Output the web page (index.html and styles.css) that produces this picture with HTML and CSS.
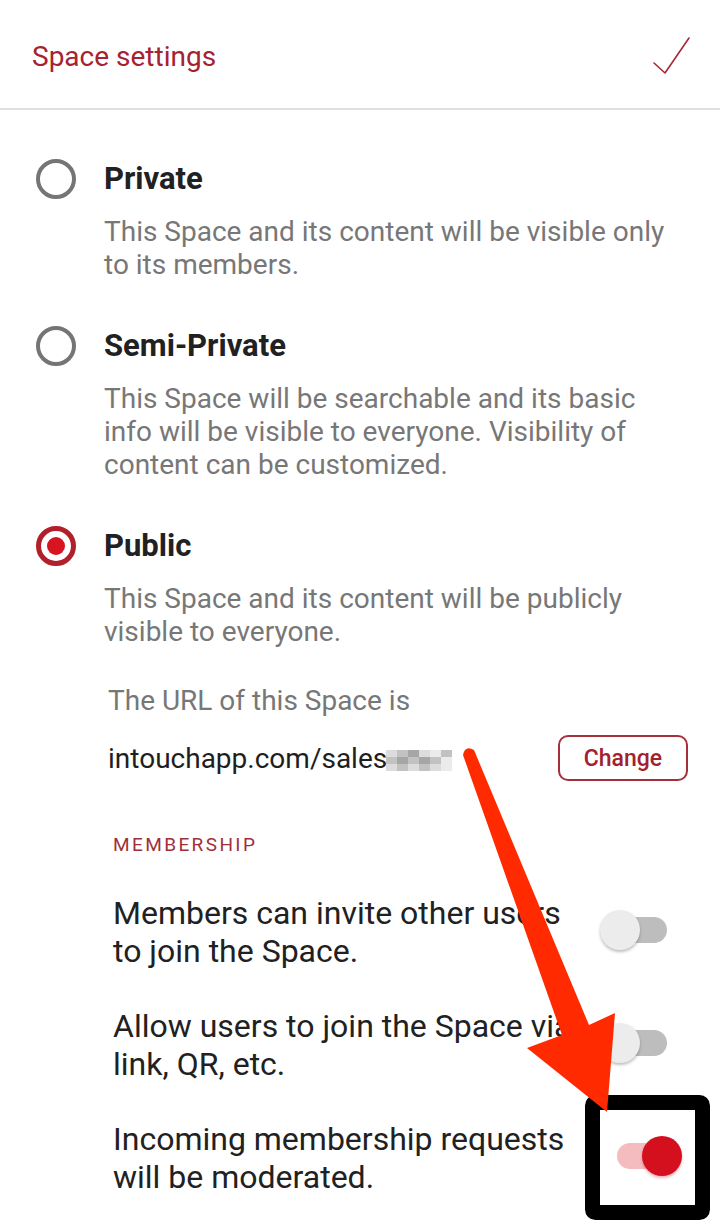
FILE: index.html
```html
<!DOCTYPE html>
<html lang="en">
<head>
<meta charset="utf-8">
<title>Space settings</title>
<link rel="stylesheet" href="styles.css">
</head>
<body>
<div class="screen">
  <header class="topbar">
    <h1 class="topbar-title">Space settings</h1>
    <svg class="done-icon" width="40" height="40" viewBox="0 0 40 40" aria-hidden="true">
      <path d="M2 27 L13 37 L37 2" fill="none" stroke="#a62835" stroke-width="1.6" stroke-linecap="round" stroke-linejoin="round"/>
    </svg>
  </header>

  <section class="options">
    <div class="option">
      <span class="radio"></span>
      <div class="option-body">
        <div class="option-title">Private</div>
        <p class="option-desc">This Space and its content will be visible only to its members.</p>
      </div>
    </div>
    <div class="option">
      <span class="radio"></span>
      <div class="option-body">
        <div class="option-title">Semi-Private</div>
        <p class="option-desc">This Space will be searchable and its basic info will be visible to everyone. Visibility of content can be customized.</p>
      </div>
    </div>
    <div class="option">
      <span class="radio radio-on"><span class="radio-dot"></span></span>
      <div class="option-body">
        <div class="option-title">Public</div>
        <p class="option-desc">This Space and its content will be publicly visible to everyone.</p>
      </div>
    </div>
  </section>

  <section class="url-block">
    <div class="url-label">The URL of this Space is</div>
    <div class="url-row">
      <div class="url-text">intouchapp.com/sales<span class="pixelated"><i class="p1"></i><i class="p2"></i><i class="p3"></i><i class="p1"></i><i class="p4"></i><i class="p2"></i><i class="p2"></i><i class="p3"></i><i class="p2"></i><i class="p3"></i><i class="p2"></i><i class="p4"></i><i class="p1"></i><i class="p2"></i><i class="p1"></i><i class="p2"></i><i class="p1"></i><i class="p4"></i></span></div>
      <button class="change-btn">Change</button>
    </div>
  </section>

  <section class="membership">
    <div class="section-label">MEMBERSHIP</div>
    <div class="member-row">
      <div class="member-text">Members can invite other users to join the Space.</div>
      <span class="switch"><span class="track"></span><span class="knob"></span></span>
    </div>
    <div class="member-row">
      <div class="member-text">Allow users to join the Space via link, QR, etc.</div>
      <span class="switch"><span class="track"></span><span class="knob"></span></span>
    </div>
    <div class="member-row">
      <div class="member-text">Incoming membership requests will be moderated.</div>
      <span class="switch switch-on"><span class="track"></span><span class="knob"></span></span>
    </div>
  </section>

  <svg class="annotation" width="720" height="1229" viewBox="0 0 720 1229" aria-hidden="true">
    <rect x="592.5" y="1102.5" width="110" height="110" rx="3" fill="none" stroke="#000" stroke-width="15"/>
    <path d="M463 755 Q465 745 474 750 L589 1025 L615 1013 L607 1112 L527 1048 L562 1035 Z" fill="#ff2a00"/>
  </svg>
</div>
</body>
</html>
```

FILE: styles.css
```css
* { box-sizing: border-box; }
html, body { margin: 0; padding: 0; background: #fff; }
body { font-family: Roboto, "Noto Sans", "Liberation Sans", sans-serif; color: #212121; }

.screen { position: relative; width: 720px; min-height: 1229px; overflow: hidden; }

.topbar {
  height: 110px;
  padding: 4px 28px 0 32px;
  display: flex;
  align-items: center;
  justify-content: space-between;
  border-bottom: 2px solid #e0e0e0;
}
.topbar-title { margin: 0; font-size: 28px; font-weight: 400; color: #a62230; }
.done-icon { display: block; }

.options { padding: 49px 0 0 36px; display: flex; flex-direction: column; gap: 45px; }
.option { display: flex; gap: 28px; align-items: flex-start; }
.radio {
  flex: none; width: 40px; height: 40px; border-radius: 50%;
  border: 4px solid #757575;
  display: flex; align-items: center; justify-content: center;
}
.radio-on { border: 5px solid #b01f2a; }
.radio-dot { width: 18px; height: 18px; border-radius: 50%; background: #d7141f; }
.option-body { flex: 1; padding-right: 40px; }
.option-title { font-size: 31px; font-weight: 700; line-height: 40px; color: #212121; }
.option-desc { margin: 16px 0 0; font-size: 28px; line-height: 33px; color: #777; }

.url-block { padding: 36px 32px 0 108px; }
.url-label { font-size: 28px; line-height: 33px; color: #777; }
.url-row { margin-top: 18px; height: 46px; display: flex; align-items: center; justify-content: space-between; }
.url-text { font-size: 28px; line-height: 33px; color: #1e1e1e; display: flex; align-items: center; }
.pixelated { display: inline-grid; grid-template-columns: repeat(6, 11px); grid-auto-rows: 7px; margin-left: -1px; margin-top: 4px; }
.pixelated i { display: block; }
.p1 { background: #dcdcdc; }
.p2 { background: #c2c2c2; }
.p3 { background: #a6a6a6; }
.p4 { background: #ebebeb; }
.change-btn {
  width: 130px; height: 46px;
  border: 2px solid #a6303a; border-radius: 10px; background: #fff;
  font-family: inherit; font-size: 23px; font-weight: 500; color: #a3202c;
  padding: 0;
}

.membership { padding: 52px 38px 0 113px; }
.section-label { font-size: 19px; line-height: 24px; letter-spacing: 2.4px; color: #a02f3b; }
.member-row { margin-top: 37px; display: flex; align-items: center; gap: 10px; }
.member-text { flex: 1; font-size: 32px; line-height: 38px; color: #212121; }
.switch { flex: none; position: relative; width: 82px; height: 40px; margin-top: -4px; }
.track { position: absolute; left: 17px; top: 7px; width: 50px; height: 26px; border-radius: 13px; background: #bdbdbd; }
.knob {
  position: absolute; left: 0; top: 0; width: 40px; height: 40px; border-radius: 50%;
  background: #ececec; box-shadow: 0 2px 3px rgba(0,0,0,0.25);
}
.switch-on .track { background: #f5bcc0; }
.switch-on .knob { left: auto; right: 0; background: #d4101e; box-shadow: 0 2px 3px rgba(180,0,20,0.3); }

.annotation { position: absolute; left: 0; top: 0; pointer-events: none; }
```
